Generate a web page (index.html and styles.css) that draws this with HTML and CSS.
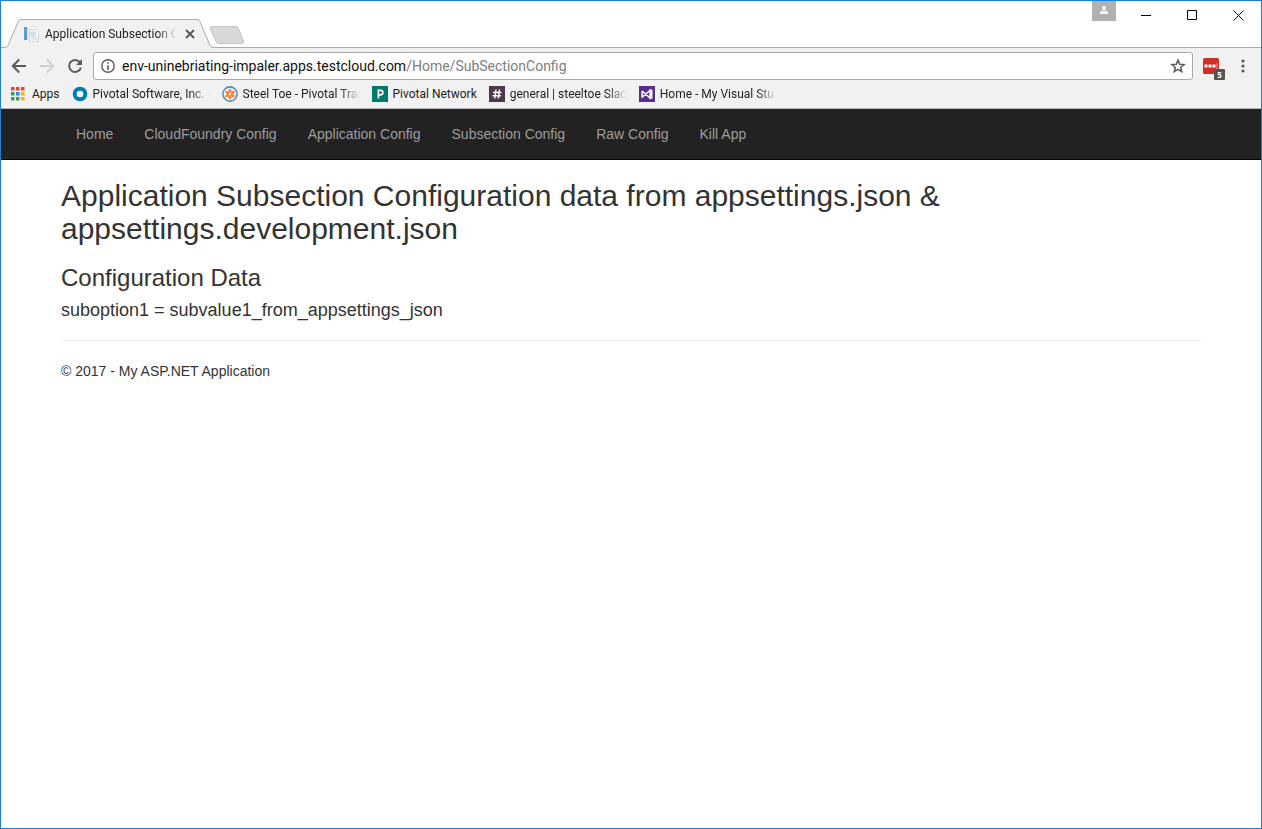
FILE: index.html
```html
<!DOCTYPE html>
<html lang="en">
<head>
<meta charset="utf-8">
<title>Application Subsection Configuration</title>
<link rel="stylesheet" href="styles.css">
</head>
<body>
<div class="window">
  <header class="chrome">
    <div class="tabstrip">
      <div class="tab">
        <svg class="tab-shape" width="212" height="29" viewBox="0 0 212 29" aria-hidden="true"><path d="M0 28.5H4Q6 28.5 7 26.500L17.500 2Q18.300.5 20 .5H196Q198 .5 199 2.500L209 26.500Q210 28.500 212 28.500V29H0Z" fill="#f1f1f1"/><path d="M0 28.500H4Q6 28.500 7 26.500L17.500 2Q18.300.5 20 .5H196Q198 .5 199 2.500L209 26.500Q210 28.500 212 28.500" fill="none" stroke="#acacac"/></svg>
        <svg class="favicon" width="16" height="16" viewBox="0 0 16 16" aria-hidden="true"><path d="M1 1h3v13H1z" fill="#5b9fcc"/><path d="M4 1h1v13H4z" fill="#c3dced"/><path d="M6.500.5h6v3h-6z" fill="#fff" stroke="#dce3e8"/><path d="M6.500 3.500h7l2 2v10h-9z" fill="#f7f9fb" stroke="#cbd5df"/><path d="M8 6h4v3H8zM8 11h6M8 13h6" fill="#dce3eb" stroke="#c5d0dc"/></svg>
        <span class="tab-title fade">Application Subsection C</span>
        <button class="icon-btn tab-close" aria-label="Close tab"><svg width="10" height="10" viewBox="0 0 10 10"><path d="M1 1l8 8M9 1L1 9" stroke="#555" stroke-width="1.800"/></svg></button>
      </div>
      <button class="icon-btn new-tab" aria-label="New tab"><svg width="36" height="18" viewBox="0 0 36 18"><path d="M3 .5H26.500Q28.500.5 29.300 2.300L34.500 15Q35.300 17.500 33 17.500H10Q8 17.500 7 15.500L1.200 2.500Q.5.5 3 .5Z" fill="#d8d8d8" stroke="#c2c2c2"/></svg></button>
      <div class="window-controls">
        <button class="icon-btn profile" aria-label="Profile"><svg width="24" height="20" viewBox="0 0 24 20"><circle cx="12" cy="7" r="2" fill="#fff"/><path d="M8 13v-1.500c0-1.300 2.500-2 4-2s4 .7 4 2V13z" fill="#fff"/></svg></button>
        <button class="icon-btn control" aria-label="Minimize"><svg width="11" height="11" viewBox="0 0 11 11"><path d="M0 5.500h10" stroke="#000"/></svg></button>
        <button class="icon-btn control" aria-label="Maximize"><svg width="11" height="11" viewBox="0 0 11 11"><path d="M.5.5h9v9h-9z" fill="none" stroke="#000"/></svg></button>
        <button class="icon-btn control" aria-label="Close"><svg width="11" height="11" viewBox="0 0 11 11"><path d="M.5.5l10 10M10.500.5l-10 10" stroke="#000"/></svg></button>
      </div>
    </div>
    <div class="toolbar">
      <div class="nav-buttons">
        <button class="icon-btn" aria-label="Back"><svg width="16" height="16" viewBox="0 0 16 16"><path d="M15 8H2M8.200 1.500L1.800 8l6.400 6.500" fill="none" stroke="#5a5a5a" stroke-width="2"/></svg></button>
        <button class="icon-btn" aria-label="Forward"><svg width="16" height="16" viewBox="0 0 16 16"><path d="M1 8h13M7.800 1.500L14.200 8l-6.400 6.500" fill="none" stroke="#d0d0d0" stroke-width="2"/></svg></button>
        <button class="icon-btn" aria-label="Reload"><svg width="16" height="16" viewBox="0 0 16 16"><path d="M12.800 4.200A6 6 0 1 0 13.900 9.500" fill="none" stroke="#5a5a5a" stroke-width="2"/><path d="M15 1v6H9z" fill="#5a5a5a"/></svg></button>
      </div>
      <div class="omnibox">
        <svg width="14" height="14" viewBox="0 0 14 14" aria-hidden="true"><circle cx="7" cy="7" r="6.200" fill="none" stroke="#5a5a5a" stroke-width="1.400"/><path d="M6.200 6.200h1.600V11H6.200zM6.200 3.200h1.600v1.600H6.200z" fill="#5a5a5a"/></svg>
        <div class="url" role="textbox" aria-label="Address" contenteditable="true" spellcheck="false">env-uninebriating-impaler.apps.testcloud.com<span class="url-path">/Home/SubSectionConfig</span></div>
        <button class="icon-btn" aria-label="Bookmark this page"><svg width="16" height="16" viewBox="0 0 16 16"><path d="M8 2l1.700 4.200 4.300.4-3.300 2.800 1.100 4.300L8 11.400l-3.800 2.300 1.100-4.300L2 6.600l4.300-.4z" fill="none" stroke="#5a5a5a" stroke-width="1.500"/></svg></button>
      </div>
      <button class="icon-btn extension" aria-label="Password manager, 5 sites"><svg width="16" height="16" viewBox="0 0 16 16"><rect width="16" height="16" rx="1.500" fill="#d32d27"/><path d="M1.500 6.500h3v3h-3zM5.500 6.500h3v3h-3zM9.500 6.500h3v3h-3z" fill="#fff"/><path d="M14 5v6" stroke="#f0a09c"/></svg><span class="badge">5</span></button>
      <button class="icon-btn menu" aria-label="Menu"><svg width="4" height="14" viewBox="0 0 4 14"><g fill="#5a5a5a"><circle cx="2" cy="2" r="1.600"/><circle cx="2" cy="7" r="1.600"/><circle cx="2" cy="12" r="1.600"/></g></svg></button>
    </div>
    <nav class="bookmarks" aria-label="Bookmarks">
      <a class="bookmark apps" href="#"><svg width="14" height="14" viewBox="0 0 14 14"><path d="M0 0h3.500v3.500H0zM5 0h3.500v3.500H5zM10 0h3.500v3.500H10z" fill="#ea4335"/><path d="M0 5h3.500v3.500H0zM0 10h3.500v3.500H0zM5 10h3.500v3.500H5z" fill="#34a05c"/><path d="M5 5h3.500v3.500H5z" fill="#2e88e8"/><path d="M10 5h3.500v3.500H10zM10 10h3.500v3.500H10z" fill="#fbb010"/></svg><span>Apps</span></a>
      <a class="bookmark clipped" href="#"><svg width="16" height="16" viewBox="0 0 16 16"><circle cx="8" cy="8" r="5.300" fill="#fff" stroke="#007cbc" stroke-width="4"/></svg><span class="fade">Pivotal Software, Inc. -</span></a>
      <a class="bookmark clipped" href="#"><svg width="16" height="16" viewBox="0 0 16 16"><circle cx="8" cy="8" r="7.100" fill="#f3f6f8" stroke="#5b8cb5" stroke-width="1.600"/><g stroke="#f4863a" stroke-width="2.600" stroke-linecap="round"><path d="M8 4v8M4.500 6l7 4M11.500 6l-7 4"/></g><circle cx="8" cy="8" r="1.200" fill="#fff"/></svg><span class="fade">Steel Toe - Pivotal Trac</span></a>
      <a class="bookmark network" href="#"><svg width="16" height="16" viewBox="0 0 16 16"><path d="M0 0h16v16H0z" fill="#007a6c"/><path d="M6.400 12.500V4.300h2.200a2.100 2.100 0 0 1 0 4.500H6.400" fill="none" stroke="#fff" stroke-width="1.700"/></svg><span>Pivotal Network</span></a>
      <a class="bookmark clipped" href="#"><svg width="16" height="16" viewBox="0 0 16 16"><path d="M0 0h16v16H0z" fill="#4d394b"/><path d="M7 3.500L5.800 12.500M10.500 3.500L9.300 12.500M4 6.500h8.500M3.500 9.800H12" stroke="#fff" stroke-width="1.400"/></svg><span class="fade">general | steeltoe Slac</span></a>
      <a class="bookmark clipped" href="#"><svg width="16" height="16" viewBox="0 0 16 16"><path d="M0 0h16v16H0z" fill="#5c2d91"/><path d="M3.200 5v6.200L11.500 4v8.500L3.200 5" fill="none" stroke="#fff" stroke-width="1.600" stroke-linejoin="round"/><path d="M10.500 3l3 1v8.200l-3 1z" fill="#fff"/></svg><span class="fade">Home - My Visual Stu</span></a>
    </nav>
  </header>
  <nav class="navbar">
    <ul class="container nav-list">
      <li><a href="#">Home</a></li>
      <li><a href="#">CloudFoundry Config</a></li>
      <li><a href="#">Application Config</a></li>
      <li><a href="#">Subsection Config</a></li>
      <li><a href="#">Raw Config</a></li>
      <li><a href="#">Kill App</a></li>
    </ul>
  </nav>
  <main class="container">
    <h2>Application Subsection Configuration data from appsettings.json &amp; appsettings.development.json</h2>
    <h3>Configuration Data</h3>
    <h4>suboption1 = subvalue1_from_appsettings_json</h4>
    <hr>
    <footer>© 2017 - My ASP.NET Application</footer>
  </main>
</div>
</body>
</html>
```
FILE: styles.css
```css
* { box-sizing: border-box; }
body { margin: 0; font: 14px/20px "Liberation Sans", Arial, sans-serif; color: #333; background: #fff; }
svg { display: block; flex: none; }
a { color: inherit; text-decoration: none; }
.window { min-height: 100vh; border: 1px solid #1a7fd4; }
.icon-btn { display: flex; align-items: center; justify-content: center; padding: 0; border: 0; background: none; flex: none; }

.chrome { background: #f1f1f1; border-bottom: 1px solid #b6b4b6; color: #222; font: 12px/16px Roboto, "Noto Sans", sans-serif; }
.tabstrip { display: flex; align-items: flex-end; height: 47px; background: #fff; box-shadow: inset 0 -1px #acacac; }
.tab { position: relative; display: flex; align-items: center; width: 212px; height: 29px; padding: 0 0 0 22px; }
.tab-shape { position: absolute; inset: 0; }
.favicon, .tab-title, .tab-close { position: relative; }
.tab-title { width: 132px; margin: 0 8px 0 6px; }
.fade { overflow: hidden; white-space: nowrap; -webkit-mask-image: linear-gradient(to left, transparent, #000 20px); mask-image: linear-gradient(to left, transparent, #000 20px); }
.new-tab { margin: 0 0 4px -4px; }
.window-controls { display: flex; align-self: flex-start; margin-left: auto; }
.profile { height: 20px; margin-right: 7px; background: #b1b1b1; }
.control { width: 46px; height: 29px; }

.toolbar { display: flex; align-items: center; height: 36px; padding: 0 16px 0 10px; }
.nav-buttons { display: flex; gap: 12px; }
.omnibox { display: flex; flex: 1; align-items: center; gap: 7px; height: 28px; margin-left: 10px; padding: 0 6px 0 7px; border: 1px solid #a9a9a9; border-radius: 3px; background: #fff; }
.url { flex: 1; overflow: hidden; white-space: nowrap; outline: 0; font-size: 14px; line-height: 20px; color: #111; }
.url-path { color: #808080; }
.extension { position: relative; margin-left: 10px; }
.badge { position: absolute; left: 11px; top: 11px; width: 11px; height: 11px; border-radius: 1px; background: #555; color: #fff; font: 700 8px/11px "Open Sans", sans-serif; text-align: center; }
.menu { margin-left: 22px; }

.bookmarks { display: flex; align-items: center; gap: 12px; height: 24px; padding: 0 10px 4px; }
.bookmark { display: flex; align-items: center; gap: 5px; white-space: nowrap; }
.apps { gap: 7px; }
.clipped { width: 138px; }
.clipped .fade { flex: 1; }

.navbar { background: #222; border-bottom: 1px solid #080808; }
.container { width: 100%; max-width: 1170px; margin: 0 auto; padding: 0 15px; }
.nav-list { display: flex; flex-wrap: wrap; gap: 1px; list-style: none; color: #9d9d9d; }
.nav-list a { display: block; padding: 15px; }
h2, h3, h4 { font-weight: 400; margin: 0; }
h2 { font-size: 30px; line-height: 33px; margin: 19px 0 20px; }
h3 { font-size: 24px; line-height: 26px; margin-bottom: 9px; }
h4 { font-size: 18px; line-height: 20px; }
hr { margin: 20px 0; border: 0; border-top: 1px solid #eee; }
```
